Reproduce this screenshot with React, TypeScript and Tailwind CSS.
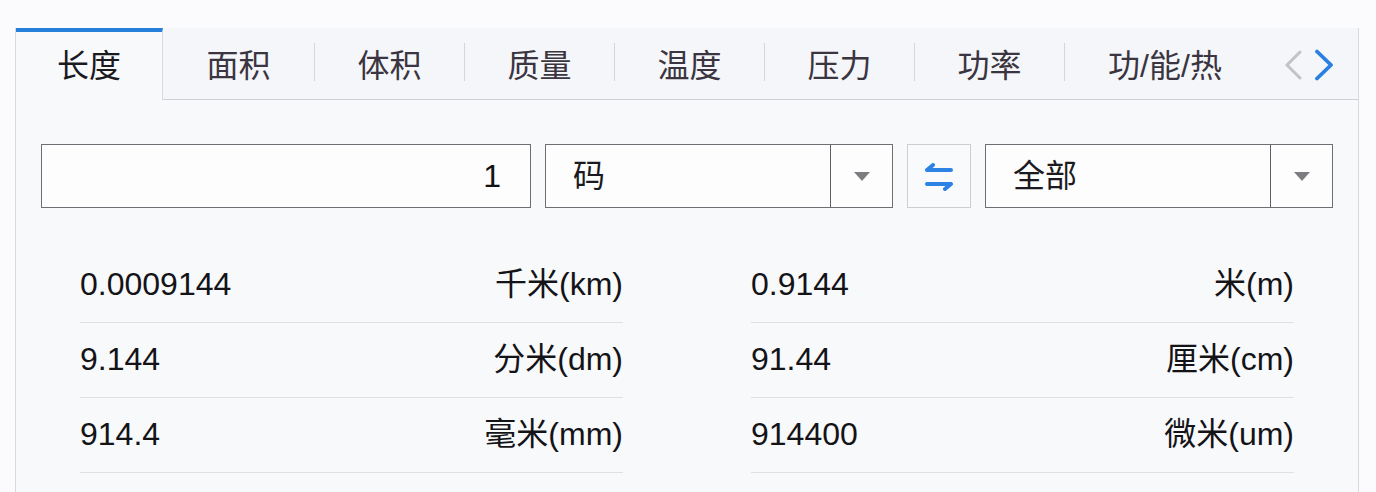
import React from "react";

const FONT = '"Liberation Sans", "Noto Sans CJK SC", Arial, sans-serif';

const TABS = ["面积", "体积", "质量", "温度", "压力", "功率"];

const RESULTS: [string, string][] = [
  ["0.0009144", "千米(km)"],
  ["0.9144", "米(m)"],
  ["9.144", "分米(dm)"],
  ["91.44", "厘米(cm)"],
  ["914.4", "毫米(mm)"],
  ["914400", "微米(um)"],
];

function Caret() {
  return (
    <svg width="16" height="9" viewBox="0 0 16 9">
      <path d="M0 0 L16 0 L8 9 Z" fill="#7e7c80" />
    </svg>
  );
}

function Select({ label }: { label: string }) {
  return (
    <div className="flex h-full w-[348px] border border-[#6f6e74] bg-[#fdfdfe]">
      <div className="flex flex-1 items-center pl-[27px] text-[32px] text-[#1c1a20]">{label}</div>
      <div className="flex w-[62px] items-center justify-center border-l border-[#5f5e64]">
        <Caret />
      </div>
    </div>
  );
}

function SwapIcon() {
  return (
    <svg width="32" height="28" viewBox="0 0 32 28" fill="none" stroke="#2d83e4" strokeWidth="4" strokeLinecap="round" strokeLinejoin="round">
      <path d="M4 7 H28 M4 7 L10 2" />
      <path d="M4 21 H28 M28 21 L22 26" />
    </svg>
  );
}

export default function App() {
  return (
    <div className="min-h-screen bg-[#fbfbfd] pl-[15px] pr-[17px] pt-[28px]" style={{ fontFamily: FONT }}>
      <div className="min-h-[464px] border-x border-[#d8d9de] bg-[#f8f9fb]">
        {/* tab strip */}
        <div className="flex h-[72px]">
          <div className="flex w-[147px] items-center justify-center border-r border-t-4 border-r-[#d8d9de] border-t-[#2580dc] bg-[#f8f9fb] text-[32px] text-[#1b1a1e]">
            长度
          </div>
          <div className="flex flex-1 items-center border-b border-[#cfd0d5] bg-[#f5f6f9]">
            {TABS.map((t, i) => (
              <React.Fragment key={t}>
                <div className={`flex self-stretch items-center justify-center pt-[4px] text-[32px] text-[#3a3540] ${i === 0 ? "w-[151px]" : "w-[149px]"}`}>
                  {t}
                </div>
                <div className="mb-[4px] h-[38px] w-px bg-[#d5d6db]" />
              </React.Fragment>
            ))}
            <div className="flex w-[200px] self-stretch items-center justify-center pt-[4px] text-[32px] text-[#3a3540]">功/能/热</div>
            <div className="ml-[19px] flex items-center gap-[12px] pt-[2px]">
              <svg width="18" height="30" viewBox="0 0 18 30" fill="none" stroke="#c3c3c6" strokeWidth="3" strokeLinecap="round" strokeLinejoin="round">
                <path d="M16 2 L3 15 L16 28" />
              </svg>
              <svg width="20" height="32" viewBox="0 0 20 32" fill="none" stroke="#2a7fe2" strokeWidth="3.8" strokeLinecap="round" strokeLinejoin="round">
                <path d="M3 2.5 L17 16 L3 29.5" />
              </svg>
            </div>
          </div>
        </div>

        {/* converter inputs */}
        <div className="mt-[44px] flex h-[64px] gap-[14px] px-[25px]">
          <div className="flex w-[490px] items-center justify-end border border-[#6f6e74] bg-[#fdfdfe] pr-[29px] text-[32px] text-[#111]">
            1
          </div>
          <Select label="码" />
          <div className="flex w-[64px] items-center justify-center border border-[#cdced3] bg-[#f9fafc] pt-[2px]">
            <SwapIcon />
          </div>
          <Select label="全部" />
        </div>

        {/* results */}
        <div className="mt-[40px] grid grid-cols-2 gap-x-[128px] px-[64px]">
          {RESULTS.map(([v, u]) => (
            <div key={u} className="flex h-[75px] items-center justify-between border-b border-[#dfe0e5] pb-[3px] text-[32px] text-[#141317]">
              <span>{v}</span>
              <span>{u}</span>
            </div>
          ))}
        </div>
      </div>
    </div>
  );
}
